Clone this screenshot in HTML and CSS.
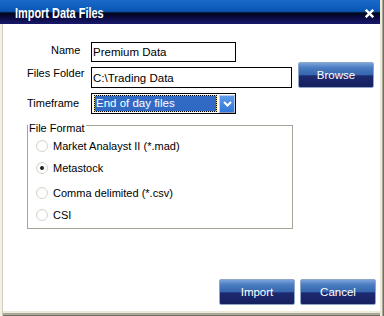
FILE: index.html
```html
<!DOCTYPE html>
<html>
<head>
<meta charset="utf-8">
<link rel="stylesheet" href="styles.css">
</head>
<body>
<div class="window">
  <div class="titlebar">
    <span class="title">Import Data Files</span>
    <svg class="close" width="9" height="9" viewBox="0 0 9 9"><path d="M1.6 1.6 L7.4 7.4 M7.4 1.6 L1.6 7.4" stroke="#fff" stroke-width="2.4" stroke-linecap="square" fill="none"/></svg>
  </div>
  <div class="client">
    <div class="row row-name">
      <span class="lbl lbl-name">Name</span>
      <div class="field field-name">Premium Data</div>
    </div>
    <div class="row row-folder">
      <span class="lbl lbl-folder">Files Folder</span>
      <div class="field field-folder">C:\Trading Data</div>
      <button class="btn btn-browse">Browse</button>
    </div>
    <div class="row row-time">
      <span class="lbl">Timeframe</span>
      <div class="select">
        <span class="sel-value">End of day files</span>
        <span class="sel-btn"><svg width="9" height="6" viewBox="0 0 9 6"><path d="M1 1 L4.5 4.5 L8 1" stroke="#fff" stroke-width="2" fill="none"/></svg></span>
      </div>
    </div>
    <div class="group">
      <span class="legend">File Format</span>
      <ul class="radios">
        <li class="radio"><span class="dot"></span>Market Analayst II (*.mad)</li>
        <li class="radio"><span class="dot checked"></span>Metastock</li>
        <li class="radio radio-gap"><span class="dot"></span>Comma delimited (*.csv)</li>
        <li class="radio"><span class="dot"></span>CSI</li>
      </ul>
    </div>
    <div class="actions">
      <button class="btn">Import</button>
      <button class="btn">Cancel</button>
    </div>
  </div>
</div>
</body>
</html>
```
FILE: styles.css
```css
html, body {
  margin: 0;
  padding: 0;
}
body {
  width: 384px;
  height: 316px;
  overflow: hidden;
  background: #fff;
  font-family: "Liberation Sans", Arial, sans-serif;
  font-size: 11px;
  color: #000;
}
.window {
  width: 384px;
  height: 316px;
  box-sizing: border-box;
  padding-right: 4px;
  display: flex;
  flex-direction: column;
  background: #fff;
  box-shadow: inset -1px 0 #716f64, inset -2px 0 #aca899, inset -4px 0 #ece9d8;
}
.titlebar {
  height: 24px;
  flex: none;
  display: flex;
  align-items: center;
  justify-content: space-between;
  padding: 0 6px 0 15px;
  background: linear-gradient(to bottom, #1a68c8 0%, #0c5ab8 40%, #0a50a8 48%, #000818 54%, #08083a 68%, #18186c 100%);
}
.title {
  color: #fff;
  font-family: "Liberation Sans", Arial, sans-serif;
  font-weight: bold;
  font-size: 14px;
  line-height: 16px;
  margin-top: 1px;
  transform: scaleX(0.78);
  transform-origin: left center;
  white-space: nowrap;
}
.close {
  display: block;
  margin-top: 2px;
}
.client {
  flex: 1;
  display: flex;
  flex-direction: column;
  padding: 18px 0 0 27px;
  box-shadow: inset 2px 0 #f3f1e6, inset 3px 0 #d0cdc0, inset 0 -1px #716f64, inset 0 -3px #aca899, inset 0 -5px #ece9d8;
}
.row {
  display: flex;
  align-items: center;
}
.lbl {
  width: 64px;
  flex: none;
  box-sizing: border-box;
  line-height: 13px;
}
.lbl-name {
  padding-left: 24px;
  margin-bottom: 3px;
}
.row-name {
  height: 20px;
}
.field {
  box-sizing: border-box;
  border: 1px solid #000;
  height: 20px;
  padding-left: 1px;
  display: flex;
  align-items: center;
  background: #fff;
  font-size: 11.5px;
}
.field-name {
  width: 145px;
}
.row-folder {
  height: 26px;
  align-items: flex-end;
}
.lbl-folder {
  align-self: center;
  margin-bottom: 4px;
}
.field-folder {
  width: 201px;
  height: 21px;
}
.btn {
  width: 76px;
  height: 26px;
  box-sizing: border-box;
  border: 1px solid #8ea6c9;
  border-radius: 2px;
  padding: 0;
  color: #fff;
  font-family: "Liberation Sans", Arial, sans-serif;
  font-size: 11.5px;
  background: linear-gradient(to bottom, #7aa3da 0%, #4a7cc0 20%, #3566ae 50%, #1c2a70 53%, #16205f 100%);
}
.btn-browse {
  margin-left: 6px;
}
.row-time {
  margin-top: 5px;
  height: 21px;
}
.select {
  width: 145px;
  height: 21px;
  box-sizing: border-box;
  border: 1px solid #000;
  padding: 1px 0 1px 2px;
  display: flex;
  gap: 2px;
}
.sel-value {
  flex: 1;
  box-sizing: border-box;
  height: 17px;
  border: 1px dotted #000;
  background: linear-gradient(#316ac5, #316ac5) padding-box, #e8d070 border-box;
  color: #fff;
  padding-left: 1px;
  font-size: 11.5px;
  line-height: 15px;
}
.sel-btn {
  width: 16px;
  height: 18px;
  box-sizing: border-box;
  border: 1px solid #b8cdee;
  border-bottom-color: #8a9cb8;
  background: linear-gradient(to bottom, #5d9bea, #3177d6);
  display: flex;
  align-items: center;
  justify-content: center;
}
.sel-btn svg {
  display: block;
}
.group {
  margin-top: 11px;
  width: 266px;
  height: 104px;
  box-sizing: border-box;
  border: 1px solid #a5a496;
  display: flex;
  flex-direction: column;
}
.legend {
  align-self: flex-start;
  margin-top: -4px;
  padding: 0 1px;
  background: #fff;
  line-height: 13px;
}
.radios {
  list-style: none;
  margin: 0;
  padding: 0 0 0 7px;
}
.radio {
  height: 22px;
  display: flex;
  align-items: center;
}
.radio-gap {
  margin-top: 3px;
}
.dot {
  width: 12px;
  height: 12px;
  box-sizing: border-box;
  border-radius: 50%;
  border: 1px solid #d6d4cb;
  background: radial-gradient(circle at 60% 60%, #ffffff 50%, #eeede6 100%);
  margin: 0 5px 0 1px;
  display: flex;
  align-items: center;
  justify-content: center;
  flex: none;
}
.dot.checked::after {
  content: "";
  width: 4px;
  height: 4px;
  border-radius: 50%;
  background: #222;
}
.actions {
  margin-top: auto;
  margin-bottom: 11px;
  padding-right: 4px;
  display: flex;
  justify-content: flex-end;
  gap: 5px;
}
```
